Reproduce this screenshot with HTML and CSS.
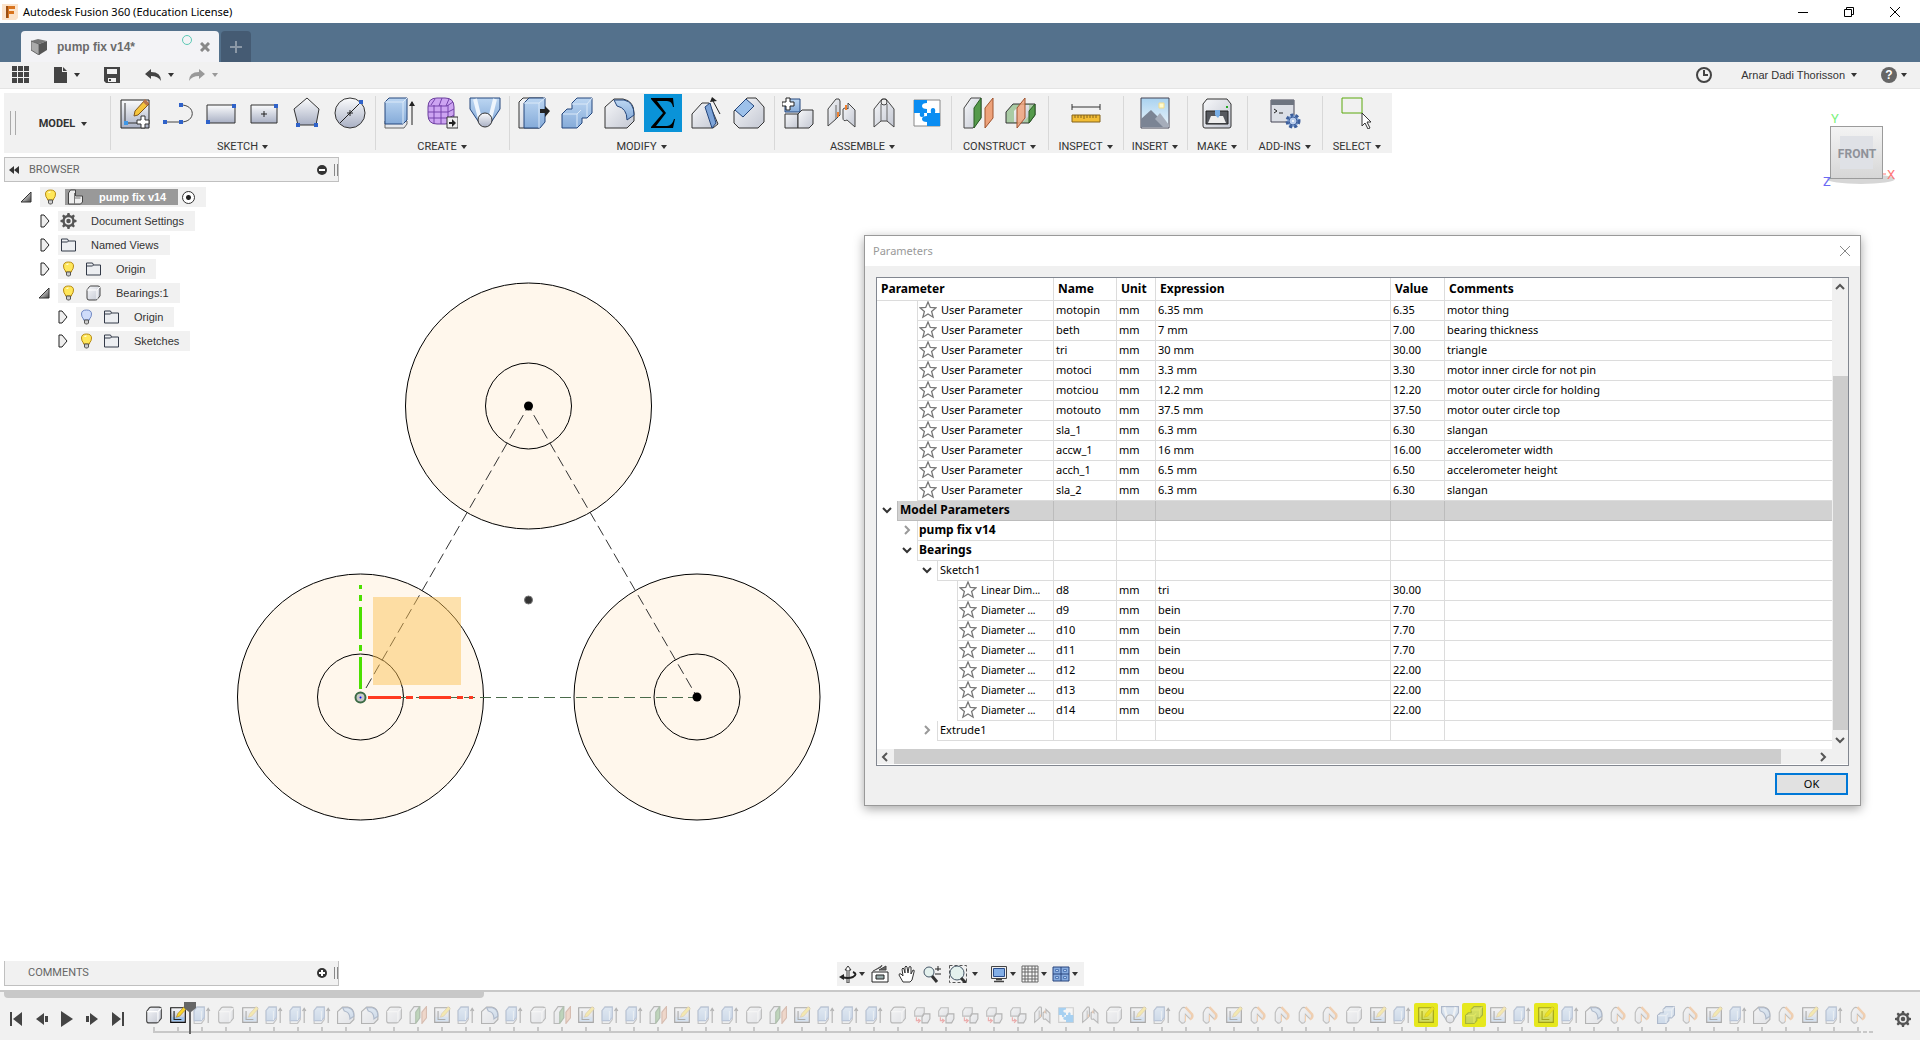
FILE: index.html
```html
<!DOCTYPE html>
<html lang="en">
<head>
<meta charset="utf-8">
<title>Autodesk Fusion 360 (Education License)</title>
<link rel="stylesheet" href="styles.css">
</head>
<body>
<svg class="defs" aria-hidden="true">
  <defs>
    <linearGradient id="metal" x1="0" y1="0" x2="0" y2="1"><stop offset="0" stop-color="#fbfcfd"/><stop offset="1" stop-color="#a9b0c4"/></linearGradient>
    <linearGradient id="steel" x1="0" y1="0" x2="1" y2="1"><stop offset="0" stop-color="#f7f8fa"/><stop offset="1" stop-color="#c3c7d2"/></linearGradient>
    <linearGradient id="blue" x1="0" y1="0" x2="0" y2="1"><stop offset="0" stop-color="#bcd6f2"/><stop offset="1" stop-color="#85abd9"/></linearGradient>
    <linearGradient id="sky" x1="0" y1="0" x2="0" y2="1"><stop offset="0" stop-color="#a9d2f0"/><stop offset="1" stop-color="#eef6fb"/></linearGradient>
    <linearGradient id="wedge" x1="0" y1="0" x2="1" y2="1"><stop offset="0.3" stop-color="#ddd"/><stop offset="1" stop-color="#444"/></linearGradient>
    <linearGradient id="cube" x1="0" y1="0" x2="0" y2="1"><stop offset="0" stop-color="#f4f4f4"/><stop offset="1" stop-color="#d6d6d6"/></linearGradient>
  </defs>
  <symbol id="i-sketch" viewBox="0 0 32 32"><path d="M2 3h28v28H2z" fill="url(#metal)" stroke="#222"/><path d="M6 6v20h14" fill="none" stroke="#333"/><path d="M5 24h4v4H5z" fill="#3f97e6"/><path d="M15 19l1-5L26 3l4 4-11 11z" fill="#f6c53c" stroke="#80561b"/><path d="M24 5l2-3 4 4-2 3z" fill="#b9764b"/><path d="M22 19h4v4h4v4h-4v4h-4v-4h-4v-4h4z" fill="#fff" stroke="#333"/></symbol>
  <symbol id="i-line" viewBox="0 0 32 32"><path d="M3 25h16M19 8c15 0 15 17 0 17" fill="none" stroke="#444"/><path d="M1 23h4v4H1zM17 23h4v4h-4zM17 6h4v4h-4z" fill="#2f62c9"/></symbol>
  <symbol id="i-rect" viewBox="0 0 32 32"><path d="M2 8h28v18H2z" fill="url(#metal)" stroke="#333"/><path d="M27 7h4v4h-4zM1 23h4v4H1z" fill="#2f62c9"/></symbol>
  <symbol id="i-crect" viewBox="0 0 32 32"><path d="M3 8h26v18H3z" fill="url(#metal)" stroke="#333"/><path d="M13 17h6M16 14v6" stroke="#222"/><path d="M26 7h4v4h-4z" fill="#2f62c9"/></symbol>
  <symbol id="i-poly" viewBox="0 0 32 32"><path d="M16 1l12 11-3 16H7L3 12z" fill="url(#metal)" stroke="#333"/><path d="M5 26h4v4H5zM23 26h4v4h-4z" fill="#2f62c9"/></symbol>
  <symbol id="i-circle" viewBox="0 0 32 32"><circle cx="16" cy="16" r="15" fill="url(#metal)" stroke="#333"/><path d="M6 26L27 5M13 16h6M16 13v6" stroke="#222"/><path d="M25 3h4v4h-4z" fill="#2f62c9"/></symbol>
  <symbol id="i-box" viewBox="0 0 32 32"><path d="M3 11q0-2 2-4l3-4q1-1 3-1h14q4 0 4 4v16l-6 7q-1 1-3 1H7q-4 0-4-4z" fill="url(#steel)" stroke="#444"/><path d="M4 10h18M23 10v18M23 10l6-6" fill="none" stroke="#fff"/></symbol>
  <symbol id="i-extrude" viewBox="0 0 32 32"><path d="M2 24h22v3l-3 4H2z" fill="#e6e8ec" stroke="#666"/><path d="M2 5l4-4h18v22l-4 4H2z" fill="url(#blue)" stroke="#24467c"/><path d="M2 5h18l4-4M20 5v22" fill="none" stroke="#dbe9f8"/><path d="M29 28V5" stroke="#222"/><path d="M26 9l3-5 3 5z" fill="#222"/></symbol>
  <symbol id="i-textrude" viewBox="0 0 32 32"><path d="M2 8l5-6h13v22l-5 7H2z" fill="#e6e8ec" stroke="#666"/><path d="M2 8l5-6h13v18l-5 6H2z" fill="url(#blue)" stroke="#4a6ea8"/><path d="M15 9v16" stroke="#dbe9f8"/><path d="M27 30V6M24 9l3-5 3 5" fill="none" stroke="#333"/></symbol>
  <symbol id="i-form" viewBox="0 0 32 32"><path d="M2 10q0-9 9-9h8q9 0 9 9v8q0 9-9 9h-8q-9 0-9-9z" fill="#cda4f2" stroke="#6b3f9c"/><path d="M2 9h19l6-4M2 15h20l6-3M3 21h20l5-3M8 8v19M15 8v19M22 8v18M9 2L5 8M16 1l-3 8M23 2l-3 7" fill="none" stroke="#7443ab"/><path d="M21 20h11v11H21z" fill="#eee" stroke="#333"/><path d="M23 25h3v-3l4 4-4 4v-3h-3z" fill="#222"/></symbol>
  <symbol id="i-loft" viewBox="0 0 32 32"><path d="M1 1h30v11L21 27H11L1 12z" fill="url(#blue)" stroke="#24467c"/><path d="M6 2l5 20M26 2l-5 20" stroke="#eef5fc" stroke-width="4" fill="none"/><circle cx="16" cy="23" r="7" fill="url(#metal)" stroke="#333"/></symbol>
  <symbol id="i-press" viewBox="0 0 32 32"><path d="M1 5l4-4h20v25l-4 5H1z" fill="url(#steel)" stroke="#333"/><path d="M6 6l5-5h16v24l-5 6H6z" fill="url(#blue)" stroke="#24467c"/><path d="M6 6h15l6-5M21 6v25" fill="none" stroke="#dbe9f8"/><path d="M22 12h5V9l5 5-5 6v-4h-5z" fill="#222"/></symbol>
  <symbol id="i-combine" viewBox="0 0 32 32"><path d="M11 12V6l5-5h15v15l-5 5h-5v5l-5 5H1V17l5-5z" fill="url(#blue)" stroke="#24467c"/><path d="M11 7h15v13M26 7l5-6M2 17h14v13M16 17l4-4" fill="none" stroke="#dbe9f8"/></symbol>
  <symbol id="i-fillet" viewBox="0 0 32 32"><path d="M1 10l9-8h9q11 2 11 14v8l-7 7H1z" fill="url(#steel)" stroke="#333"/><path d="M10 3h10q10 2 10 15l-7 5q0-12-10-14z" fill="url(#blue)" stroke="#24467c"/></symbol>
  <symbol id="i-draft" viewBox="0 0 32 32"><path d="M2 31V17l10-11h7l9 21-5 4z" fill="url(#steel)" stroke="#333"/><path d="M15 10l5-4 6 20-4 5z" fill="#7da4d8" stroke="#24467c"/><path d="M30 17L23 4" stroke="#222"/><path d="M20 5l2-5 5 4z" fill="#222"/></symbol>
  <symbol id="i-chamfer" viewBox="0 0 32 32"><path d="M1 14L14 1h9l8 9v15l-6 6H6l-5-5z" fill="url(#steel)" stroke="#333"/><path d="M2 13L13 2l8 7-11 11z" fill="#9dc1ea" stroke="#24467c"/></symbol>
  <symbol id="i-newcomp" viewBox="0 0 32 32"><path d="M3 6l4-4h11v13H3z" fill="url(#blue)" stroke="#24467c"/><path d="M3 17h13v14H3z" fill="url(#steel)" stroke="#333"/><path d="M16 17l4-4h11v14l-4 4H16z" fill="url(#steel)" stroke="#333"/><path d="M4 1h4v4h4v4H8v4H4V9H0V5h4z" fill="#fff" stroke="#222"/></symbol>
  <symbol id="i-joint" viewBox="0 0 32 32"><path d="M3 12L11 2q4-1 4 2v14l-4 4-8 7z" fill="url(#steel)" stroke="#444"/><path d="M11 8v14" stroke="#666"/><path d="M18 12q3-3 5 0V6l7 7v17l-8-7q-4 2-4-2z" fill="url(#steel)" stroke="#444"/><path d="M13 20v-5M21 13V8" stroke="#f08030" stroke-width="2"/></symbol>
  <symbol id="i-asbuilt" viewBox="0 0 32 32"><path d="M6 12l8-10 4 0 8 10v18l-7-6h-6l-7 6z" fill="url(#steel)" stroke="#444"/><path d="M13 7v17M19 7v17" stroke="#666"/><circle cx="16" cy="5" r="3" fill="#eee" stroke="#444"/></symbol>
  <symbol id="i-puzzle" viewBox="0 0 32 32"><path d="M3 3h26v26H3z" fill="#fff" stroke="#888"/><path d="M3 3h13v3q-5 0-5 3t5 3v4h-3q1 4-2 4t-2-4H3zM16 16h4q-1-5 2-5t2 5h5v13H16v-4q-5 0-5-3t5-3z" fill="#0a8df2"/></symbol>
  <symbol id="i-plane" viewBox="0 0 32 32"><path d="M2 11L9 1h10v20l-8 10H2z" fill="url(#steel)" stroke="#444"/><path d="M12 11l7-10v20l-7 10z" fill="#559a4b" stroke="#2a5c25"/><path d="M23 11l8-10v20l-8 10z" fill="#eda27a" stroke="#a0522d"/></symbol>
  <symbol id="i-midplane" viewBox="0 0 32 32"><path d="M1 15l7-8h22v11l-6 8H1z" fill="#a9cba4" stroke="#333"/><path d="M9 14l6-6h9v11l-6 6H9z" fill="url(#steel)"/><path d="M24 14l6-7v11l-6 8z" fill="#559a4b" stroke="#2a5c25"/><path d="M12 11l8-10v20l-8 10z" fill="#f0a47e" fill-opacity=".85" stroke="#a0522d"/></symbol>
  <symbol id="i-measure" viewBox="0 0 32 32"><path d="M2 10h28M2 7v6M30 7v6" stroke="#333"/><path d="M2 18h28v7H2z" fill="#f2bd35" stroke="#84621a"/><path d="M5 18v3M8 18v3M11 18v3M14 18v4M17 18v3M20 18v3M23 18v3M26 18v3" stroke="#84621a"/></symbol>
  <symbol id="i-insert" viewBox="0 0 32 32"><path d="M2 1h28v30H2z" fill="url(#sky)" stroke="#445"/><path d="M20 6h5v5h-5z" fill="#fffbd0" stroke="#f3dc8a"/><path d="M2 22l10-9 17 17H2z" fill="#7b8494"/><path d="M16 22l5-6 9 12v2h-6z" fill="#a6adba"/></symbol>
  <symbol id="i-make" viewBox="0 0 32 32"><path d="M2 7l4-5h20l4 5v22q0 2-2 2H4q-2 0-2-2z" fill="url(#steel)" stroke="#333"/><path d="M5 14h22v13H5z" fill="#55585e" stroke="#222"/><path d="M7 26l3-7h12l3 7z" fill="#eee"/><path d="M14 13h5v5l-2 3-3-3z" fill="#78aee6"/><path d="M25 9h2v2h-2z" fill="#2a2"/></symbol>
  <symbol id="i-addins" viewBox="0 0 32 32"><path d="M2 3h23v22H2z" fill="#dcdfe6" stroke="#445"/><path d="M2 3h23v5H2z" fill="#6d7480"/><path d="M5 12l3 2-3 2M10 16h4" fill="none" stroke="#222"/><circle cx="24" cy="24" r="6" fill="#8fb0e0" stroke="#3d5f9c" stroke-width="3" stroke-dasharray="3 2"/><circle cx="24" cy="24" r="4" fill="#b9cdec" stroke="#3d5f9c"/><circle cx="24" cy="24" r="1" fill="#fff"/></symbol>
  <symbol id="i-select" viewBox="0 0 32 32"><path d="M1 1h20v15H1z" fill="none" stroke="#5ba80c"/><path d="M21 16v13l3-3 3 6 2-1-3-6h4z" fill="#fff" stroke="#333"/></symbol>
  <symbol id="i-tsketch" viewBox="0 0 32 32"><path d="M3 3h26v26H3z" fill="url(#metal)" stroke="#111"/><path d="M5 20h22v7H5z" fill="#9cc4ee"/><path d="M9 9v15h13" fill="none" stroke="#222"/><path d="M13 20l3-7L27 1l4 4-12 13z" fill="#f8d62c" stroke="#a8761f" stroke-width="1"/></symbol>
  <symbol id="i-copy" viewBox="0 0 32 32"><path d="M3 9l4-6h13v9l-4 6H3z" fill="url(#steel)" stroke="#555"/><path d="M16 20l4-6h10v9l-4 7H16z" fill="url(#steel)" stroke="#333"/><path d="M6 20v6h6M9 23l4 3-4 4" fill="none" stroke="#e02020" stroke-width="2"/></symbol>
  <symbol id="i-bend" viewBox="0 0 32 32"><path d="M4 12Q8 0 15 3l11 12q2 6-3 8l-8-8v11q-2 6-7 4l-4-4z" fill="url(#steel)" stroke="#555"/><path d="M15 2l12 13q2 6-4 9" fill="none" stroke="#f08a2c" stroke-width="4"/><path d="M15 16v11" stroke="#f08a2c"/></symbol>
  <symbol id="i-bulb" viewBox="0 0 16 16"><path d="M5 10Q3 8 3 5q0-4 5-4t5 4q0 3-2 5v1H5z" fill="#ffe75a" stroke="#b78b14"/><path d="M6 4q0-1 2-1" fill="none" stroke="#fff"/><path d="M6 11h4v3l-1 1H7l-1-1z" fill="#ccc" stroke="#555"/></symbol>
  <symbol id="i-bulboff" viewBox="0 0 16 16"><path d="M5 10Q3 8 3 5q0-4 5-4t5 4q0 3-2 5v1H5z" fill="#cfdcfa" stroke="#7189c4"/><path d="M6 11h4v3l-1 1H7l-1-1z" fill="#ccc" stroke="#555"/></symbol>
  <symbol id="i-folder" viewBox="0 0 16 16"><path d="M1 2h6l1 2h7v10H1z" fill="#eceef1" stroke="#333a48"/><path d="M1 5h6l1-1" fill="none" stroke="#333a48"/></symbol>
  <symbol id="i-gear" viewBox="0 0 16 16"><path d="M7 0h2l.5 2 1.700.7L13 1.600l1.400 1.400-1.100 1.800.7 1.700 2 .5v2l-2 .5-.7 1.700 1.100 1.800L13 14.400l-1.800-1.100-1.700.7L9 16H7l-.5-2-1.700-.7L3 14.400 1.600 13l1.100-1.800L2 9.500 0 9V7l2-.5.7-1.700L1.600 3 3 1.600l1.800 1.100L6.500 2z" fill="#555"/><circle cx="8" cy="8" r="3" fill="#555" stroke="#eee" stroke-width="1.500"/></symbol>
  <symbol id="i-closed" viewBox="0 0 12 16"><path d="M2 2h3l5 6-5 6H2z" fill="#eee" stroke="#222"/></symbol>
  <symbol id="i-open" viewBox="0 0 12 12"><path d="M11 1v10H1z" fill="url(#wedge)" stroke="#333"/></symbol>
  <symbol id="i-star" viewBox="0 0 18 18"><path d="M9 1l2.300 5.400 5.700.4-4.400 3.700 1.500 5.700L9 13l-5.100 3.200 1.500-5.700L1 6.800l5.700-.4z" fill="#fff" stroke="#777" stroke-width="1.300"/></symbol>
  <symbol id="i-down" viewBox="0 0 10 10"><path d="M1 3l4 4 4-4" fill="none" stroke="#333" stroke-width="2"/></symbol>
  <symbol id="i-right" viewBox="0 0 10 10"><path d="M3 1l4 4-4 4" fill="none" stroke="#999" stroke-width="2"/></symbol>
</svg>

<header class="titlebar">
  <svg class="logo" width="16" height="16" viewBox="0 0 16 16"><path d="M0 0h16v14l-2 2H0z" fill="#fbe3cb"/><path d="M4 2h9v3H7v2h5v3H7v4H4z" fill="#d8741f"/><path d="M4 2h2v12H4z" fill="#9b4f14"/></svg>
  <h1>Autodesk Fusion 360 (Education License)</h1>
  <div class="winbtns">
    <button aria-label="Minimize"><svg width="10" height="10"><path d="M0 5.500h10" stroke="#000"/></svg></button>
    <button aria-label="Restore"><svg width="10" height="10"><path d="M.5 2.500h7v7h-7zM2.500 2.500v-2h7v7h-2" fill="none" stroke="#000"/></svg></button>
    <button aria-label="Close"><svg width="10" height="10"><path d="M0 0l10 10M10 0L0 10" stroke="#000"/></svg></button>
  </div>
</header>

<nav class="tabs">
  <div class="tab">
    <svg width="16" height="16" viewBox="0 0 16 16"><path d="M0 2l7-2 9 2-8 3z" fill="#777"/><path d="M0 2l8 3v11l-8-5z" fill="#aaa" stroke="#666"/><path d="M8 5l8-3v9l-8 5z" fill="#555"/></svg>
    <span>pump fix v14*</span>
    <i class="sync"></i>
    <button aria-label="Close tab"><svg width="10" height="10"><path d="M1 1l8 8M9 1L1 9" stroke="#888" stroke-width="3"/></svg></button>
  </div>
  <button class="newtab" aria-label="New tab"><svg width="12" height="12"><path d="M6 0v12M0 6h12" stroke="#8b98a6" stroke-width="2"/></svg></button>
</nav>

<div class="quick">
  <button class="q-grid" aria-label="Data panel"><svg width="18" height="18" fill="#444"><path d="M0 0h5v5H0zM6 0h5v5H6zM12 0h5v5h-5zM0 6h5v5H0zM6 6h5v5H6zM12 6h5v5h-5zM0 12h5v5H0zM6 12h5v5H6zM12 12h5v5h-5z"/></svg></button>
  <button class="q-file" aria-label="File"><svg width="14" height="16"><path d="M0 0h8v5h5v11H0z" fill="#444"/><path d="M9 0l4 4H9z" fill="#444"/></svg><i class="caret"></i></button>
  <button class="q-save" aria-label="Save"><svg width="16" height="16"><path d="M0 0h16v16H2l-2-2z" fill="#444"/><path d="M3 2h10v5H3zM4 11h8v4H4z" fill="#f1f1f1"/><path d="M5 12h2v2H5z" fill="#444"/></svg></button>
  <button class="q-undo" aria-label="Undo"><svg width="17" height="12"><path d="M0 5l6-5v3q10 0 10 9-3-5-10-5v3z" fill="#444"/></svg><i class="caret"></i></button>
  <button class="q-redo" aria-label="Redo"><svg width="17" height="12"><path d="M16 5l-6-5v3Q0 3 0 12q3-5 10-5v3z" fill="#999"/></svg><i class="caret dim"></i></button>
  <button class="q-clock" aria-label="Job status"><svg width="16" height="16"><circle cx="8" cy="8" r="7" fill="none" stroke="#444" stroke-width="2"/><path d="M8 3v5h4" fill="none" stroke="#444" stroke-width="2"/></svg></button>
  <button class="q-user"><span>Arnar Dadi Thorisson</span><i class="caret"></i></button>
  <button class="q-help" aria-label="Help"><b>?</b><i class="caret"></i></button>
</div>

<div class="ribbon">
  <div class="grip"></div>
  <button class="mode">MODEL<i class="caret"></i></button>
  <section class="group g6">
    <div class="tools">
      <button aria-label="Create Sketch"><svg><use href="#i-sketch"/></svg></button><button aria-label="Line"><svg><use href="#i-line"/></svg></button><button aria-label="Rectangle"><svg><use href="#i-rect"/></svg></button><button aria-label="Center Rectangle"><svg><use href="#i-crect"/></svg></button><button aria-label="Polygon"><svg><use href="#i-poly"/></svg></button><button aria-label="Circle"><svg><use href="#i-circle"/></svg></button>
    </div>
    <button class="menu">SKETCH<i class="caret"></i></button>
  </section>
  <section class="group g3">
    <div class="tools">
      <button aria-label="Extrude"><svg><use href="#i-extrude"/></svg></button><button aria-label="Form"><svg><use href="#i-form"/></svg></button><button aria-label="Loft"><svg><use href="#i-loft"/></svg></button>
    </div>
    <button class="menu">CREATE<i class="caret"></i></button>
  </section>
  <section class="group g6">
    <div class="tools">
      <button aria-label="Press Pull"><svg><use href="#i-press"/></svg></button><button aria-label="Combine"><svg><use href="#i-combine"/></svg></button><button aria-label="Fillet"><svg><use href="#i-fillet"/></svg></button><button class="sigma" aria-label="Change Parameters"><svg viewBox="0 0 38 38"><path d="M7 4h22l1 9h-1q-1-6-6-6H13l9 12-10 13h11q5 0 7-7h1l-2 9H7v-1l12-14L7 5z" fill="#000"/></svg></button><button aria-label="Draft"><svg><use href="#i-draft"/></svg></button><button aria-label="Chamfer"><svg><use href="#i-chamfer"/></svg></button>
    </div>
    <button class="menu">MODIFY<i class="caret"></i></button>
  </section>
  <section class="group g4">
    <div class="tools">
      <button aria-label="New Component"><svg><use href="#i-newcomp"/></svg></button><button aria-label="Joint"><svg><use href="#i-joint"/></svg></button><button aria-label="As-built Joint"><svg><use href="#i-asbuilt"/></svg></button><button aria-label="Rigid Group"><svg><use href="#i-puzzle"/></svg></button>
    </div>
    <button class="menu">ASSEMBLE<i class="caret"></i></button>
  </section>
  <section class="group g2">
    <div class="tools">
      <button aria-label="Offset Plane"><svg><use href="#i-plane"/></svg></button><button aria-label="Midplane"><svg><use href="#i-midplane"/></svg></button>
    </div>
    <button class="menu">CONSTRUCT<i class="caret"></i></button>
  </section>
  <section class="group g1 wide">
    <div class="tools"><button aria-label="Measure"><svg><use href="#i-measure"/></svg></button></div>
    <button class="menu">INSPECT<i class="caret"></i></button>
  </section>
  <section class="group g1">
    <div class="tools"><button aria-label="Insert Image"><svg><use href="#i-insert"/></svg></button></div>
    <button class="menu">INSERT<i class="caret"></i></button>
  </section>
  <section class="group g1 slim">
    <div class="tools"><button aria-label="3D Print"><svg><use href="#i-make"/></svg></button></div>
    <button class="menu">MAKE<i class="caret"></i></button>
  </section>
  <section class="group g1 wide">
    <div class="tools"><button aria-label="Scripts"><svg><use href="#i-addins"/></svg></button></div>
    <button class="menu">ADD-INS<i class="caret"></i></button>
  </section>
  <section class="group g1 mid">
    <div class="tools"><button aria-label="Select tool"><svg><use href="#i-select"/></svg></button></div>
    <button class="menu">SELECT<i class="caret"></i></button>
  </section>
</div>

<main class="workspace">
  <svg class="drawing" width="620" height="560" viewBox="220 270 620 560">
    <g fill="#fff7ec" stroke="#000">
      <circle cx="360.500" cy="697" r="123"/><circle cx="360.500" cy="697" r="43"/>
      <circle cx="697" cy="697" r="123"/><circle cx="697" cy="697" r="43"/>
      <circle cx="528.500" cy="406" r="123"/><circle cx="528.500" cy="406" r="43"/>
    </g>
    <path d="M366 688L528.500 406L697 697" fill="none" stroke="#333" stroke-dasharray="11 5"/>
    <path d="M368 697.500h328" stroke="#4a6b4a" stroke-dasharray="11 5"/>
    <path d="M373 597h88v88h-88z" fill="#fbc050" fill-opacity=".47"/>
    <path d="M360.500 689v-32M360.500 651v-6M360.500 639v-32M360.500 601v-6M360.500 589v-4" stroke="#4be000" stroke-width="3"/>
    <path d="M368 697.500h33M406 697.500h7M419 697.500h32M457 697.500h6M469 697.500h4" stroke="#ff3a20" stroke-width="3"/>
    <circle cx="360.500" cy="697.500" r="5" fill="#c8c8c8" stroke="#3c6b45" stroke-width="2"/><circle cx="360.500" cy="697.500" r="1" fill="#00f"/>
    <circle cx="528.500" cy="406" r="4.500"/><circle cx="697" cy="697" r="4.500"/><circle cx="528.500" cy="600" r="4" fill="#333" stroke="#777"/>
  </svg>

  <svg class="viewcube" width="88" height="84" viewBox="0 0 88 84" role="img" aria-label="View cube">
    <ellipse cx="45" cy="67" rx="34" ry="5" fill="#bbb" opacity=".6"/>
    <rect x="14.500" y="14.500" width="52" height="52" fill="url(#cube)" stroke="#9b9b9b"/>
    <rect x="24" y="24" width="33" height="33" fill="#dfe1e6"/>
    <text x="41" y="46" class="face">FRONT</text>
    <path d="M67 62h3" stroke="#f77"/>
    <text x="19" y="11" class="axis" fill="#7cf27c">Y</text><text x="75" y="67" class="axis" fill="#f77">X</text><text x="11" y="74" class="axis" fill="#6a6af5">Z</text>
  </svg>

  <aside class="browser">
    <div class="panelbar">
      <svg width="10" height="8"><path d="M5 0v8L0 4zM10 0v8L5 4z" fill="#333"/></svg>
      <h2>BROWSER</h2>
      <svg class="dot" width="10" height="10"><circle cx="5" cy="5" r="5" fill="#333"/><path d="M2 5h6" stroke="#fff" stroke-width="2"/></svg>
      <i class="pull"></i>
    </div>
    <ul class="tree">
      <li class="d0"><svg class="tw open"><use href="#i-open"/></svg><div class="node"><svg class="ic"><use href="#i-bulb"/></svg><div class="sel"><svg class="ic" viewBox="0 0 16 16"><path d="M1 4l2-3h5v6h7v6l-2 2H1z" fill="#eee" stroke="#444"/><path d="M7 4v11M7 9h6" stroke="#777"/></svg><b>pump fix v14</b></div><input type="radio" checked aria-label="Activate pump fix v14"></div></li>
      <li class="d1"><svg class="tw"><use href="#i-closed"/></svg><div class="node"><svg class="ic"><use href="#i-gear"/></svg><span>Document Settings</span></div></li>
      <li class="d1"><svg class="tw"><use href="#i-closed"/></svg><div class="node"><svg class="ic"><use href="#i-folder"/></svg><span>Named Views</span></div></li>
      <li class="d1"><svg class="tw"><use href="#i-closed"/></svg><div class="node"><svg class="ic"><use href="#i-bulb"/></svg><svg class="ic"><use href="#i-folder"/></svg><span>Origin</span></div></li>
      <li class="d1"><svg class="tw open"><use href="#i-open"/></svg><div class="node"><svg class="ic"><use href="#i-bulb"/></svg><svg class="ic thick"><use href="#i-box"/></svg><span>Bearings:1</span></div></li>
      <li class="d2"><svg class="tw"><use href="#i-closed"/></svg><div class="node"><svg class="ic"><use href="#i-bulboff"/></svg><svg class="ic"><use href="#i-folder"/></svg><span>Origin</span></div></li>
      <li class="d2"><svg class="tw"><use href="#i-closed"/></svg><div class="node"><svg class="ic"><use href="#i-bulb"/></svg><svg class="ic"><use href="#i-folder"/></svg><span>Sketches</span></div></li>
    </ul>
  </aside>

  <div class="bottom">
    <div class="panelbar comments">
      <h2>COMMENTS</h2>
      <svg class="dot" width="10" height="10"><circle cx="5" cy="5" r="5" fill="#333"/><path d="M2 5h6M5 2v6" stroke="#fff" stroke-width="2"/></svg>
      <i class="pull"></i>
    </div>
    <div class="navbar">
      <button aria-label="Orbit"><svg viewBox="0 0 18 18"><path d="M8 18V5H6l3-4 3 4h-2v13z" fill="#fff" stroke="#333"/><path d="M14 7q5 2 0 5-5 2-11 0" fill="none" stroke="#222" stroke-width="2"/><path d="M0 12l5-3v6z" fill="#222"/></svg><i class="caret"></i></button>
      <button class="n-look" aria-label="Look At"><svg viewBox="0 0 18 18"><path d="M1 7h16v10H1z" fill="#fff" stroke="#222"/><path d="M5 10h8v4H5z" fill="#9aa" stroke="#222"/><path d="M2 6l8-4 1-2M8 5h7V1z" fill="#666" stroke="#444"/></svg></button>
      <button class="n-pan" aria-label="Pan"><svg viewBox="0 0 18 18"><path d="M5 17L1 10q0-2 2-1l2 2-1-7q1-2 2 0l1 4V2q1-2 2 0l1 6 1-6q1-1 2 0v7l2-4q2 0 1 2l-2 8-2 2z" fill="#fff" stroke="#333"/></svg></button>
      <button class="n-zoom" aria-label="Zoom"><svg viewBox="0 0 18 18"><circle cx="6" cy="7" r="5" fill="#e4f1ee" stroke="#456"/><path d="M9 11l5 6" stroke="#333" stroke-width="3"/><path d="M15 1v5M12 4h6M12 9h6" stroke="#222"/></svg></button>
      <button class="n-fit" aria-label="Fit"><svg viewBox="0 0 18 18"><path d="M.5 .5h17v17H.5z" fill="none" stroke="#555" stroke-dasharray="3 2"/><circle cx="8" cy="8" r="7" fill="#e4f1ee" stroke="#456"/><path d="M12 13l5 5" stroke="#333" stroke-width="3"/></svg><i class="caret"></i></button>
      <button class="n-disp" aria-label="Display"><svg viewBox="0 0 18 18"><path d="M1.500 1.500h15v12h-15z" fill="#eee" stroke="#444"/><path d="M3.500 3.500h11v8h-11z" fill="#82aee6" stroke="#2a4d8c"/><path d="M6 14.500h6M4 16.500h10" stroke="#444" stroke-width="1.500"/></svg><i class="caret"></i></button>
      <button class="n-grid" aria-label="Grid"><svg viewBox="0 0 18 18"><path d="M1 1h16v16H1zM4 1v16M7 1v16M11 1v16M14 1v16M1 4h16M1 7h16M1 11h16M1 14h16" fill="#f8f8f8" stroke="#666"/></svg><i class="caret"></i></button>
      <button class="n-grid" aria-label="Viewports"><svg viewBox="0 0 18 18"><path d="M1 2h16v14H1z" fill="#86abdf" stroke="#28447c"/><path d="M9 2v14M1 9h16" stroke="#28447c"/><path d="M3.500 4.500h3v2h-3zM11.500 4.500h3v2h-3zM3.500 11.500h3v2h-3zM11.500 11.500h3v2h-3z" fill="#b8d0f0" stroke="#5278b4"/></svg><i class="caret"></i></button>
    </div>
  </div>

  <section class="dialog" role="dialog" aria-labelledby="dlg">
    <header><h2 id="dlg">Parameters</h2><button aria-label="Close dialog"><svg width="10" height="10"><path d="M0 0l10 10M10 0L0 10" stroke="#888"/></svg></button></header>
    <div class="frame">
      <table>
        <colgroup><col class="c1"><col class="c2"><col class="c3"><col class="c4"><col class="c5"><col></colgroup>
        <thead><tr><th>Parameter</th><th>Name</th><th>Unit</th><th>Expression</th><th>Value</th><th>Comments</th></tr></thead>
        <tbody>
          <tr><td class="l2"><div><svg><use href="#i-star"/></svg>User Parameter</div></td><td>motopin</td><td>mm</td><td>6.35 mm</td><td>6.35</td><td>motor thing</td></tr>
          <tr><td class="l2"><div><svg><use href="#i-star"/></svg>User Parameter</div></td><td>beth</td><td>mm</td><td>7 mm</td><td>7.00</td><td>bearing thickness</td></tr>
          <tr><td class="l2"><div><svg><use href="#i-star"/></svg>User Parameter</div></td><td>tri</td><td>mm</td><td>30 mm</td><td>30.00</td><td>triangle</td></tr>
          <tr><td class="l2"><div><svg><use href="#i-star"/></svg>User Parameter</div></td><td>motoci</td><td>mm</td><td>3.3 mm</td><td>3.30</td><td>motor inner circle for not pin</td></tr>
          <tr><td class="l2"><div><svg><use href="#i-star"/></svg>User Parameter</div></td><td>motciou</td><td>mm</td><td>12.2 mm</td><td>12.20</td><td>motor outer circle for holding</td></tr>
          <tr><td class="l2"><div><svg><use href="#i-star"/></svg>User Parameter</div></td><td>motouto</td><td>mm</td><td>37.5 mm</td><td>37.50</td><td>motor outer circle top</td></tr>
          <tr><td class="l2"><div><svg><use href="#i-star"/></svg>User Parameter</div></td><td>sla_1</td><td>mm</td><td>6.3 mm</td><td>6.30</td><td>slangan</td></tr>
          <tr><td class="l2"><div><svg><use href="#i-star"/></svg>User Parameter</div></td><td>accw_1</td><td>mm</td><td>16 mm</td><td>16.00</td><td>accelerometer width</td></tr>
          <tr><td class="l2"><div><svg><use href="#i-star"/></svg>User Parameter</div></td><td>acch_1</td><td>mm</td><td>6.5 mm</td><td>6.50</td><td>accelerometer height</td></tr>
          <tr><td class="l2"><div><svg><use href="#i-star"/></svg>User Parameter</div></td><td>sla_2</td><td>mm</td><td>6.3 mm</td><td>6.30</td><td>slangan</td></tr>
          <tr class="head"><td class="l1"><svg class="ex"><use href="#i-down"/></svg><div><b>Model Parameters</b></div></td><td></td><td></td><td></td><td></td><td></td></tr>
          <tr><td class="l2"><svg class="ex"><use href="#i-right"/></svg><div><b>pump fix v14</b></div></td><td></td><td></td><td></td><td></td><td></td></tr>
          <tr><td class="l2"><svg class="ex"><use href="#i-down"/></svg><div><b>Bearings</b></div></td><td></td><td></td><td></td><td></td><td></td></tr>
          <tr><td class="l3"><svg class="ex"><use href="#i-down"/></svg><div>Sketch1</div></td><td></td><td></td><td></td><td></td><td></td></tr>
          <tr><td class="l4"><div><svg><use href="#i-star"/></svg>Linear Dim...</div></td><td>d8</td><td>mm</td><td>tri</td><td>30.00</td><td></td></tr>
          <tr><td class="l4"><div><svg><use href="#i-star"/></svg>Diameter ...</div></td><td>d9</td><td>mm</td><td>bein</td><td>7.70</td><td></td></tr>
          <tr><td class="l4"><div><svg><use href="#i-star"/></svg>Diameter ...</div></td><td>d10</td><td>mm</td><td>bein</td><td>7.70</td><td></td></tr>
          <tr><td class="l4"><div><svg><use href="#i-star"/></svg>Diameter ...</div></td><td>d11</td><td>mm</td><td>bein</td><td>7.70</td><td></td></tr>
          <tr><td class="l4"><div><svg><use href="#i-star"/></svg>Diameter ...</div></td><td>d12</td><td>mm</td><td>beou</td><td>22.00</td><td></td></tr>
          <tr><td class="l4"><div><svg><use href="#i-star"/></svg>Diameter ...</div></td><td>d13</td><td>mm</td><td>beou</td><td>22.00</td><td></td></tr>
          <tr><td class="l4"><div><svg><use href="#i-star"/></svg>Diameter ...</div></td><td>d14</td><td>mm</td><td>beou</td><td>22.00</td><td></td></tr>
          <tr><td class="l3"><svg class="ex"><use href="#i-right"/></svg><div>Extrude1</div></td><td></td><td></td><td></td><td></td><td></td></tr>
        </tbody>
      </table>
      <div class="vscroll"><svg viewBox="0 0 10 10"><path d="M1 7l4-4 4 4" fill="none" stroke="#555" stroke-width="2"/></svg><i></i><svg viewBox="0 0 10 10"><path d="M1 3l4 4 4-4" fill="none" stroke="#555" stroke-width="2"/></svg></div>
      <div class="hscroll"><svg viewBox="0 0 10 10"><path d="M7 1L3 5l4 4" fill="none" stroke="#555" stroke-width="2"/></svg><i></i><svg viewBox="0 0 10 10"><path d="M3 1l4 4-4 4" fill="none" stroke="#555" stroke-width="2"/></svg></div>
    </div>
    <footer><button class="ok">OK</button></footer>
  </section>
</main>

<footer class="timeline">
  <div class="thumb"></div>
  <div class="track">
    <div class="play">
      <button aria-label="First"><svg width="14" height="14"><path d="M0 0h2v14H0zM12 0v14L3 7z"/></svg></button>
      <button aria-label="Previous"><svg width="14" height="14"><path d="M9 1v12L1 7zM10 4h3v6h-3z"/></svg></button>
      <button aria-label="Play"><svg width="14" height="16"><path d="M1 0v16l12-8z"/></svg></button>
      <button aria-label="Next"><svg width="14" height="14"><path d="M5 1v12l8-6zM1 4h3v6H1z"/></svg></button>
      <button aria-label="Last"><svg width="14" height="14"><path d="M12 0h2v14h-2zM2 0v14l9-7z"/></svg></button>
    </div>
    <ol>
      <li class="done"><button><svg><use href="#i-box"/></svg></button></li>
      <li class="done"><button><svg><use href="#i-tsketch"/></svg></button><svg class="marker" viewBox="0 0 14 32"><path d="M1 0h12v6l-5 4v22H6V10L1 6z" fill="#666"/></svg></li>
      <li><button><svg><use href="#i-textrude"/></svg></button></li>
      <li><button><svg><use href="#i-box"/></svg></button></li>
      <li><button><svg><use href="#i-tsketch"/></svg></button></li>
      <li><button><svg><use href="#i-textrude"/></svg></button></li>
      <li><button><svg><use href="#i-textrude"/></svg></button></li>
      <li><button><svg><use href="#i-textrude"/></svg></button></li>
      <li><button><svg><use href="#i-fillet"/></svg></button></li>
      <li><button><svg><use href="#i-fillet"/></svg></button></li>
      <li><button><svg><use href="#i-box"/></svg></button></li>
      <li><button><svg><use href="#i-plane"/></svg></button></li>
      <li><button><svg><use href="#i-tsketch"/></svg></button></li>
      <li><button><svg><use href="#i-textrude"/></svg></button></li>
      <li><button><svg><use href="#i-fillet"/></svg></button></li>
      <li><button><svg><use href="#i-textrude"/></svg></button></li>
      <li><button><svg><use href="#i-box"/></svg></button></li>
      <li><button><svg><use href="#i-plane"/></svg></button></li>
      <li><button><svg><use href="#i-tsketch"/></svg></button></li>
      <li><button><svg><use href="#i-textrude"/></svg></button></li>
      <li><button><svg><use href="#i-textrude"/></svg></button></li>
      <li><button><svg><use href="#i-plane"/></svg></button></li>
      <li><button><svg><use href="#i-tsketch"/></svg></button></li>
      <li><button><svg><use href="#i-textrude"/></svg></button></li>
      <li><button><svg><use href="#i-textrude"/></svg></button></li>
      <li><button><svg><use href="#i-box"/></svg></button></li>
      <li><button><svg><use href="#i-plane"/></svg></button></li>
      <li><button><svg><use href="#i-tsketch"/></svg></button></li>
      <li><button><svg><use href="#i-textrude"/></svg></button></li>
      <li><button><svg><use href="#i-textrude"/></svg></button></li>
      <li><button><svg><use href="#i-textrude"/></svg></button></li>
      <li><button><svg><use href="#i-box"/></svg></button></li>
      <li><button><svg><use href="#i-copy"/></svg></button></li>
      <li><button><svg><use href="#i-copy"/></svg></button></li>
      <li><button><svg><use href="#i-copy"/></svg></button></li>
      <li><button><svg><use href="#i-copy"/></svg></button></li>
      <li><button><svg><use href="#i-copy"/></svg></button></li>
      <li><button><svg><use href="#i-joint"/></svg></button></li>
      <li><button><svg><use href="#i-puzzle"/></svg></button></li>
      <li><button><svg><use href="#i-joint"/></svg></button></li>
      <li><button><svg><use href="#i-box"/></svg></button></li>
      <li><button><svg><use href="#i-tsketch"/></svg></button></li>
      <li><button><svg><use href="#i-textrude"/></svg></button></li>
      <li><button><svg><use href="#i-bend"/></svg></button></li>
      <li><button><svg><use href="#i-bend"/></svg></button></li>
      <li><button><svg><use href="#i-tsketch"/></svg></button></li>
      <li><button><svg><use href="#i-bend"/></svg></button></li>
      <li><button><svg><use href="#i-bend"/></svg></button></li>
      <li><button><svg><use href="#i-bend"/></svg></button></li>
      <li><button><svg><use href="#i-bend"/></svg></button></li>
      <li><button><svg><use href="#i-box"/></svg></button></li>
      <li><button><svg><use href="#i-tsketch"/></svg></button></li>
      <li><button><svg><use href="#i-textrude"/></svg></button></li>
      <li class="warn"><button><svg><use href="#i-tsketch"/></svg></button></li>
      <li><button><svg><use href="#i-loft"/></svg></button></li>
      <li class="warn"><button><svg><use href="#i-combine"/></svg></button></li>
      <li><button><svg><use href="#i-tsketch"/></svg></button></li>
      <li><button><svg><use href="#i-textrude"/></svg></button></li>
      <li class="warn"><button><svg><use href="#i-tsketch"/></svg></button></li>
      <li><button><svg><use href="#i-textrude"/></svg></button></li>
      <li><button><svg><use href="#i-fillet"/></svg></button></li>
      <li><button><svg><use href="#i-bend"/></svg></button></li>
      <li><button><svg><use href="#i-bend"/></svg></button></li>
      <li><button><svg><use href="#i-combine"/></svg></button></li>
      <li><button><svg><use href="#i-bend"/></svg></button></li>
      <li><button><svg><use href="#i-tsketch"/></svg></button></li>
      <li><button><svg><use href="#i-textrude"/></svg></button></li>
      <li><button><svg><use href="#i-fillet"/></svg></button></li>
      <li><button><svg><use href="#i-bend"/></svg></button></li>
      <li><button><svg><use href="#i-tsketch"/></svg></button></li>
      <li><button><svg><use href="#i-textrude"/></svg></button></li>
      <li><button><svg><use href="#i-bend"/></svg></button></li>
    </ol>
    <button class="settings" aria-label="Timeline settings"><svg width="16" height="16"><use href="#i-gear"/></svg></button>
  </div>
</footer>
</body>
</html>
```
FILE: styles.css
```css
* { box-sizing: border-box; }
body {
  margin: 0; min-height: 100vh; display: flex; flex-direction: column;
  background: #fff; color: #333; font: 11px/16px "Liberation Sans", Arial, sans-serif;
}
h1, h2 { margin: 0; font: inherit; }
button { border: 0; padding: 0; margin: 0; background: none; color: inherit; font: inherit; display: flex; align-items: center; justify-content: center; }
ul, ol { list-style: none; margin: 0; padding: 0; }
svg { display: block; flex: none; }
.defs { position: absolute; width: 0; height: 0; }
.caret { flex: none; width: 0; height: 0; border: 3px solid transparent; border-top: 4px solid #333; border-bottom: 0; margin-left: 6px; }
.caret.dim { border-top-color: #999; }

/* window title */
.titlebar { height: 23px; display: flex; align-items: center; padding: 0 2px 0; }
.logo { margin-right: 5px; }
.titlebar h1 { flex: 1; font: 11px/20px "Noto Sans", sans-serif; color: #000; }
.winbtns { display: flex; }
.winbtns button { width: 46px; height: 20px; }

/* document tabs */
.tabs { height: 39px; background: #54718c; display: flex; align-items: flex-end; gap: 2px; padding-left: 21px; }
.tab { position: relative; width: 198px; height: 31px; background: #f3f3f6; border-radius: 4px 4px 0 0; display: flex; align-items: center; padding: 0 9px 0 10px; gap: 10px; }
.tab span { flex: 1; font-size: 12px; font-weight: bold; color: #6b6b6b; }
.sync { position: absolute; left: 161px; top: 4px; width: 10px; height: 10px; border: 1px solid #5cc9b5; border-radius: 50%; }
.newtab { width: 30px; height: 31px; background: #455b73; border-radius: 4px 4px 0 0; }

/* quick access */
.quick { height: 27px; background: #f1f1f1; border-bottom: 1px solid #e4e4e4; display: flex; align-items: center; padding: 0 13px 0 12px; }
.q-file { margin-left: 24px; }
.q-save { margin-left: 24px; }
.q-undo { margin-left: 25px; }
.q-redo { margin-left: 15px; }
.q-clock { margin-left: auto; }
.q-user { margin: 0 24px 0 29px; }
.q-help .caret { margin-left: 4px; }
.q-help b { width: 16px; height: 16px; border-radius: 50%; background: #666; color: #fff; font-size: 12px; text-align: center; }

/* ribbon */
.ribbon { align-self: flex-start; margin: 4px 0 0 4px; height: 60px; background: #f1f1f1; display: flex; font: 11px/16px Roboto, sans-serif; color: #333; }
.grip { width: 6px; height: 24px; margin: 18px 0 0 6px; border: 1px solid #aaa; border-width: 0 1px; }
.mode { width: 94px; height: 62px; font-weight: bold; }
.group { position: relative; display: flex; flex-direction: column; align-items: center; }
.group::before { content: ""; position: absolute; left: 0; top: 3px; width: 1px; height: 54px; background: #d8d8d8; }
.tools { display: flex; }
.tools button { width: 43px; height: 40px; }
.tools svg { width: 32px; height: 32px; }
.tools .sigma svg { width: 38px; height: 38px; background: #0a93d8; }
.menu { height: 16px; margin-top: 6px; }
.menu .caret { margin-left: 4px; }
.g6 { width: 265px; }
.g4 { width: 177px; }
.g3 { width: 134px; }
.g2 { width: 97px; }
.g1 { width: 64px; }
.g1.wide { width: 75px; }
.g1.mid { width: 70px; }
.g1.slim { width: 60px; }

/* canvas */
.workspace { position: relative; flex: 1; display: flex; flex-direction: column; justify-content: space-between; padding: 4px; }
.drawing { position: absolute; left: 220px; top: 117px; }
.viewcube { position: absolute; right: 16px; top: -41px; }
.face { font: bold 12px Roboto, sans-serif; fill: #8f9299; text-anchor: middle; }
.axis { font: 13px Roboto, sans-serif; text-anchor: middle; }
.browser, .comments { width: 335px; position: relative; }
.panelbar { height: 25px; border: 1px solid #c0c0c0; background: #f1f1f1; display: flex; align-items: center; padding: 0 0 0 4px; }
.panelbar h2 { flex: 1; margin-left: 10px; font: 11px/16px Roboto, sans-serif; color: #666; }
.comments { border-top: 0; }
.comments h2 { margin-left: 19px; }
.dot { margin-right: 7px; }
.pull { width: 4px; height: 12px; border: 1px solid #888; border-width: 0 1px; }
.tree { margin-top: 5px; display: grid; gap: 4px; }
.tree li { display: flex; align-items: center; height: 20px; }
.d0 { padding-left: 16px; }
.d1 { padding-left: 34px; }
.d2 { padding-left: 52px; }
.tw { width: 12px; height: 16px; margin: 0 7px 0 1px; }
.tw.open { width: 12px; height: 12px; margin: 0 8px 0 0; }
.node { height: 20px; display: flex; align-items: center; gap: 4px; background: #f1f1f1; padding-right: 11px; }
.ic { width: 21px; height: 16px; }
.ic.thick { stroke-width: 2px; }
.node span { margin-left: 8px; }
.sel { background: #999; color: #fff; height: 16px; display: flex; align-items: center; padding-right: 12px; }
.sel b { margin-left: 13px; }
.node input { appearance: none; margin: 0; width: 13px; height: 13px; border: 1px solid #333; border-radius: 50%; background: radial-gradient(#222 0 2px, #fff 3px); }
.bottom { display: grid; grid-template-columns: 1fr auto 1fr; align-items: end; }
.navbar { height: 24px; background: #f1f1f1; display: flex; align-items: center; padding: 0 6px 0 2px; }
.navbar svg { width: 18px; height: 18px; }
.navbar .caret { margin-left: 2px; }
.n-look { margin-left: 6px; }
.n-pan { margin-left: 9px; }
.n-zoom { margin-left: 7px; }
.n-fit { margin-left: 8px; }
.n-fit .caret { margin-left: 5px; }
.n-disp { margin-left: 12px; }
.n-grid { margin-left: 5px; }

/* parameters dialog */
.dialog { position: absolute; left: 45%; right: 59px; top: 82px; background: #f0f0f0; border: 1px solid #999; box-shadow: 0 3px 10px rgba(0,0,0,.35); color: #000; font: 11px/18px "Noto Sans", sans-serif; }
.dialog > header { height: 30px; background: #fff; display: flex; align-items: center; justify-content: space-between; padding: 0 10px 0 8px; color: #999; }
.frame { margin: 11px 11px 0; border: 1px solid #828790; background: #fff; display: grid; grid-template-columns: 1fr 16px; }
table { width: 100%; table-layout: fixed; border-collapse: separate; border-spacing: 0; margin-bottom: 8px; }
.c1 { width: 177px; }
.c2 { width: 63px; }
.c3 { width: 39px; }
.c4 { width: 235px; }
.c5 { width: 54px; }
th { height: 23px; padding: 0 4px; text-align: left; font-size: 12px; border: solid #dcdcdc; border-width: 0 1px 1px 0; }
th:last-child, td:last-child { border-right: 0; }
td { height: 20px; padding: 0 2px; border: solid #dcdcdc; border-width: 0 1px 1px 0; white-space: nowrap; vertical-align: top; }
td:first-child { position: relative; padding: 0; border-bottom: 0; }
td div { height: 20px; display: flex; align-items: flex-start; gap: 4px; padding-left: 1px; border: solid #dcdcdc; border-width: 0 0 1px 1px; }
td div svg { width: 18px; height: 18px; }
td b { font-size: 12px; }
.l1 div { margin-left: 20px; }
.l2 div { margin-left: 40px; }
.l3 div { margin-left: 60px; }
.l4 div { margin-left: 80px; font-size: 10px; }
.l1 div, .l3 div { padding-left: 2px; }
.ex { position: absolute; top: 4px; width: 10px; height: 10px; }
.l1 .ex { left: 5px; }
.l2 .ex { left: 25px; }
.l3 .ex { left: 45px; }
.head td, .head div { background: #d2d2d2; border-color: #bcbcbc; }
.head .l1 { background: #fff; }
.vscroll { background: #f0f0f0; display: flex; flex-direction: column; align-items: center; justify-content: space-between; padding: 4px 0; }
.vscroll i { width: 15px; background: #cdcdcd; flex: 1; margin: 84px 0 5px; }
.hscroll { grid-column: 1 / 3; height: 16px; background: #f0f0f0; display: flex; align-items: center; padding: 0 20px 0 3px; border-bottom: 1px solid #fff; }
.hscroll i { height: 15px; background: #cdcdcd; flex: 1; margin: 0 37px 0 4px; }
.vscroll svg, .hscroll svg { width: 10px; height: 10px; }
.dialog > footer { display: flex; justify-content: flex-end; padding: 7px 12px 10px; }
.ok { width: 73px; height: 22px; background: #e1e1e1; border: 2px solid #0078d7; }

/* timeline */
.timeline { border-top: 2px solid #c8c8c8; background: #f1f1f1; }
.thumb { width: 25%; height: 6px; margin-left: 4px; background: #c8c8c8; border-radius: 0 0 4px 4px; }
.track { display: flex; padding: 5px 9px 5px 4px; height: 42px; align-items: center; }
.play { display: flex; margin-right: 13px; fill: #444; }
.play button { width: 25px; height: 24px; }
.timeline ol { display: flex; align-self: flex-start; }
.timeline li { position: relative; width: 24px; height: 30px; }
.timeline li button { width: 24px; height: 24px; border-radius: 2px; }
.timeline li button svg { width: 18px; height: 18px; stroke-width: 2px; opacity: .32; }
.timeline .done button svg { opacity: 1; }
.timeline .warn button { background: #e6e81e; }
.timeline li::before { content: ""; position: absolute; left: 11px; bottom: 0; width: 24px; height: 2px; background: #c8c8c8; }
.timeline li:last-child::before { width: 18px; background: repeating-linear-gradient(90deg, #c8c8c8 0 4px, transparent 4px 6px); }
.timeline li::after { content: ""; position: absolute; left: 11px; bottom: 0; width: 2px; height: 6px; background: #c8c8c8; }
.marker { position: absolute; z-index: 1; right: -7px; bottom: -1px; width: 14px; height: 32px; }
.settings { margin-left: auto; }
```
